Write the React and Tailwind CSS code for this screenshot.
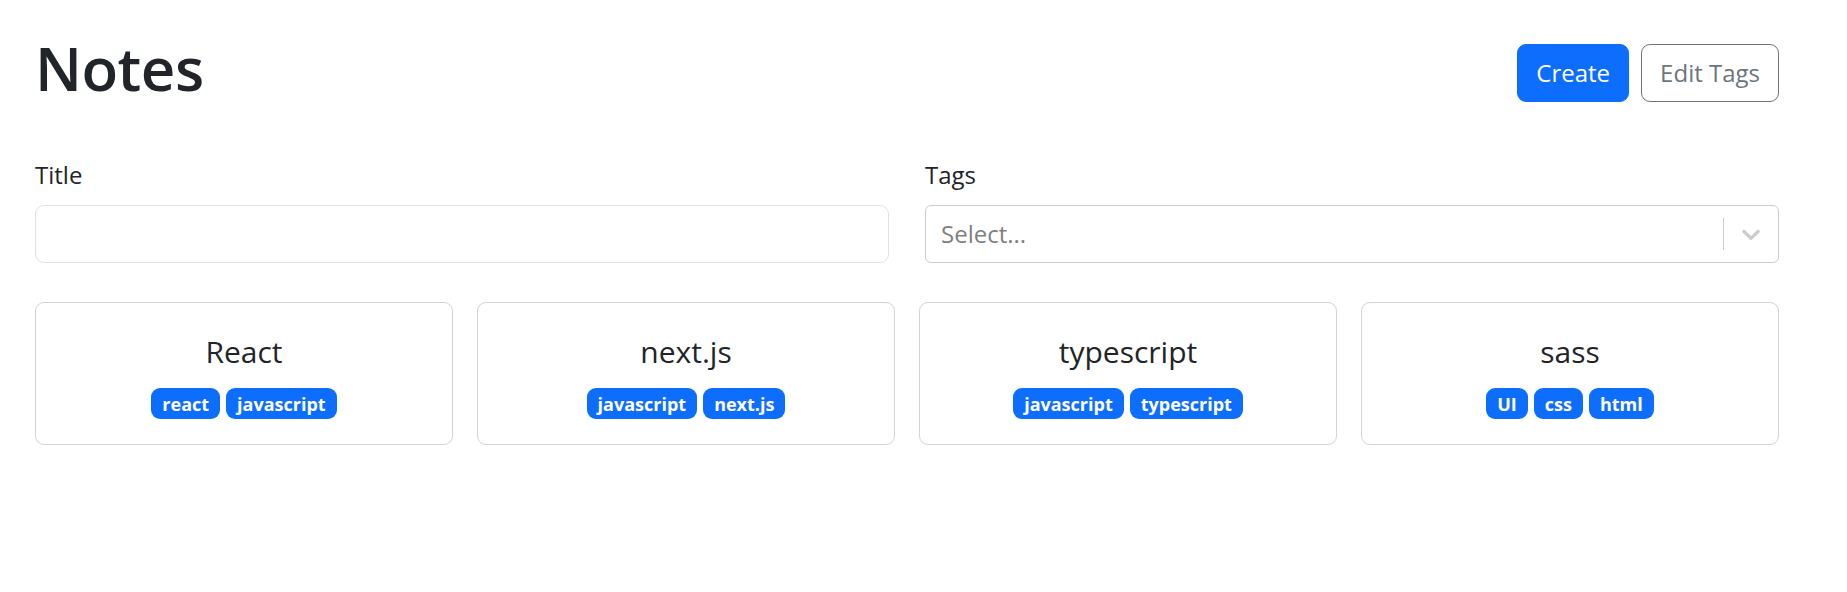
const notes = [
  { title: "React", tags: ["react", "javascript"] },
  { title: "next.js", tags: ["javascript", "next.js"] },
  { title: "typescript", tags: ["javascript", "typescript"] },
  { title: "sass", tags: ["UI", "css", "html"] },
];

function Chevron() {
  return (
    <svg width="30" height="30" viewBox="0 0 20 20" aria-hidden="true">
      <path
        fill="#cccccc"
        d="M4.516 7.548c0.436-0.446 1.043-0.481 1.576 0l3.908 3.747 3.908-3.747c0.533-0.481 1.141-0.446 1.574 0 0.436 0.445 0.408 1.197 0 1.615-0.406 0.418-4.695 4.502-4.695 4.502-0.217 0.223-0.502 0.335-0.787 0.335s-0.57-0.112-0.789-0.335c0 0-4.287-4.084-4.695-4.502s-0.436-1.17 0-1.615z"
      />
    </svg>
  );
}

export default function App() {
  return (
    <div
      className="min-h-[592px] bg-white text-[#212529]"
      style={{ fontFamily: '"Open Sans", "Noto Sans", sans-serif' }}
    >
      <div className="pl-[35px] pr-[68px] pt-[32px]">
        <div className="flex items-start justify-between">
          <h1 className="text-[60px] leading-[72px] font-semibold tracking-[-0.5px]">Notes</h1>
          <div className="flex gap-[12px] mt-[12px]">
            <button className="h-[58px] px-[18px] rounded-[9px] bg-[#0d6efd] border border-[#0d6efd] text-white text-[24px] leading-[36px]">
              Create
            </button>
            <button className="h-[58px] px-[18px] rounded-[9px] bg-white border border-[#6c757d] text-[#6c757d] text-[24px] leading-[36px]">
              Edit Tags
            </button>
          </div>
        </div>

        <div className="grid grid-cols-2 gap-x-[36px] mt-[53px]">
          <div className="flex flex-col">
            <label className="text-[24px] leading-[36px] mb-[12px]">Title</label>
            <div className="h-[58px] rounded-[9px] border border-[#dee2e6] bg-white"></div>
          </div>
          <div className="flex flex-col">
            <label className="text-[24px] leading-[36px] mb-[12px]">Tags</label>
            <div className="h-[58px] rounded-[6px] border border-[#cccccc] bg-white flex items-center">
              <div className="flex-1 pl-[15px] text-[24px] text-[#808080]">Select...</div>
              <div className="w-px h-[32px] bg-[#cccccc]"></div>
              <div className="px-[12px] flex items-center">
                <Chevron />
              </div>
            </div>
          </div>
        </div>

        <div className="grid grid-cols-4 gap-[24px] mt-[39px]">
          {notes.map((n) => (
            <div
              key={n.title}
              className="h-[143px] rounded-[9px] border border-[#d3d3d3] flex flex-col items-center pt-[31px]"
            >
              <div className="text-[30px] leading-[36px]">{n.title}</div>
              <div className="flex gap-[6px] mt-[18px]">
                {n.tags.map((t) => (
                  <span
                    key={t}
                    className="bg-[#0d6efd] text-white font-bold text-[18px] leading-[18px] px-[11px] py-[6.5px] rounded-[9px]"
                  >
                    {t}
                  </span>
                ))}
              </div>
            </div>
          ))}
        </div>
      </div>
    </div>
  );
}
